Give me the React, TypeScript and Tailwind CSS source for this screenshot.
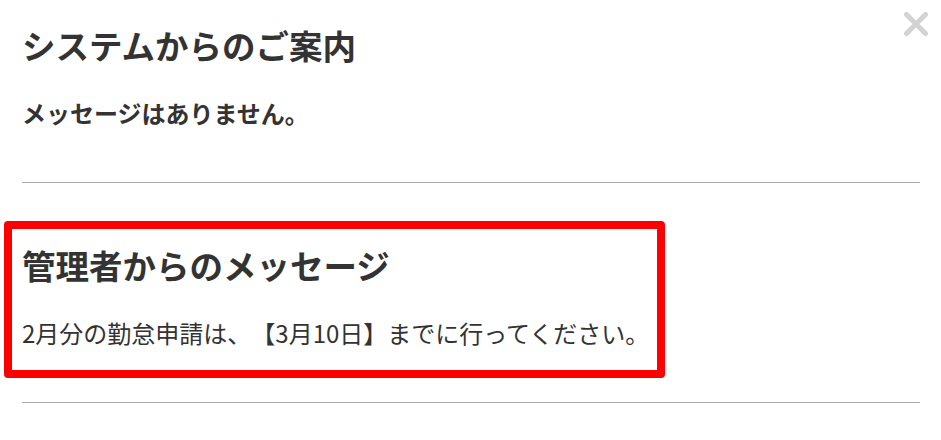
export default function App() {
  return (
    <div
      className="relative w-[941px] h-[440px] bg-white pl-[22px] pr-[21px] text-[#333333] overflow-hidden [text-spacing-trim:space-all]"
      style={{ fontFamily: '"Noto Sans CJK JP", "Noto Sans", sans-serif' }}
    >
      <button className="absolute left-[903px] top-[11px] w-[26px] h-[26px]" aria-label="close">
        <svg width="26" height="26" viewBox="0 0 26 26">
          <path d="M3.5 3.5 L22.5 22.5 M22.5 3.5 L3.5 22.5" stroke="#d2d2d2" strokeWidth="5" strokeLinecap="round" />
        </svg>
      </button>
      <h2 className="mt-[25px] text-[33.5px] leading-[40px] font-bold">システムからのご案内</h2>
      <p className="mt-[31px] text-[24px] leading-[34px] font-bold">メッセージはありません。</p>
      <hr className="mt-[52px] border-0 border-t border-[#aaaaaa]" />
      <section className="mt-[38px] -ml-[18px] w-[661px] border-8 border-[#ff0000] rounded-[4px] pl-[10px] pt-[16px] pb-[20px]">
        <h2 className="text-[33.5px] leading-[40px] font-bold">管理者からのメッセージ</h2>
        <p className="mt-[31px] text-[24px] leading-[34px] [text-spacing-trim:space-all]">2月分の勤怠申請は、【3月10日】までに行ってください。</p>
      </section>
      <hr className="mt-[24px] border-0 border-t border-[#aaaaaa]" />
    </div>
  );
}
